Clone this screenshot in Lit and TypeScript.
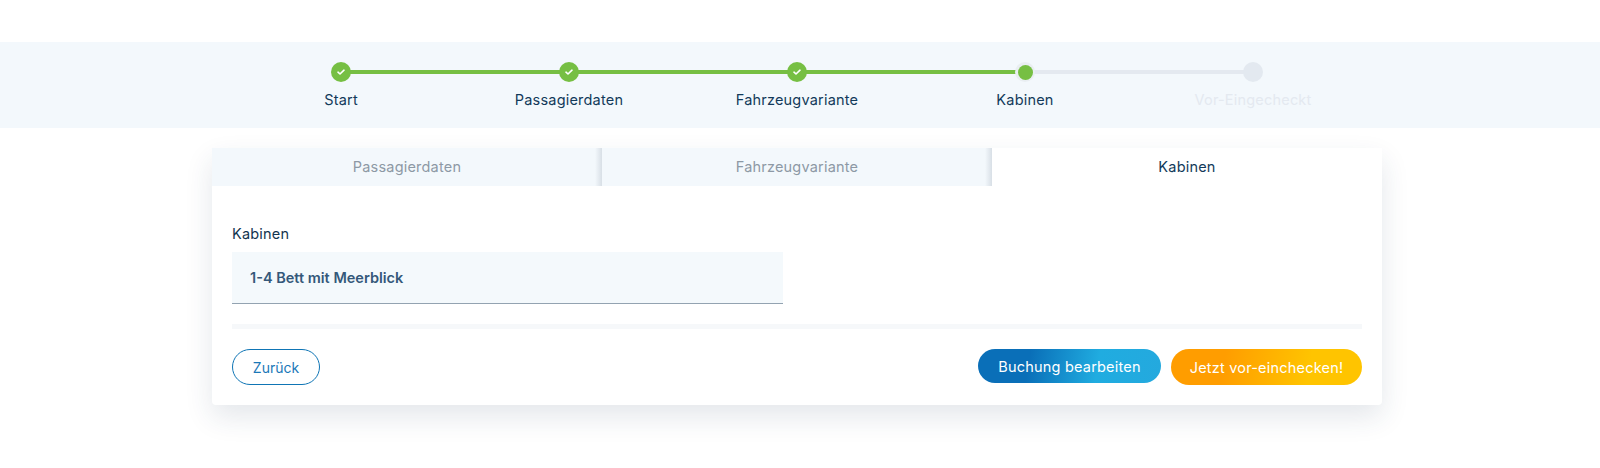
import { LitElement, html, css, svg } from "lit";
import { customElement } from "lit/decorators.js";

const check = svg`<svg class="chk" viewBox="0 0 10 10" width="10" height="10"><path d="M2 5.2 L4 7 L8 3.2" fill="none" stroke="#fff" stroke-width="1.6" stroke-linecap="round" stroke-linejoin="round"/></svg>`;

const steps = [
  { label: "Start", state: "done" },
  { label: "Passagierdaten", state: "done" },
  { label: "Fahrzeugvariante", state: "done" },
  { label: "Kabinen", state: "current" },
  { label: "Vor-Eingecheckt", state: "todo" },
];

@customElement("app-root")
export class AppRoot extends LitElement {
  static styles = css`
    :host {
      display: block;
      box-sizing: border-box;
      min-height: 468px;
      padding-top: 42px;
      font-family: "Inter", "Noto Sans", sans-serif;
      font-size: 14.5px;
      letter-spacing: 0.2px;
      color: #123a5a;
    }
    .band {
      background: #f3f8fc;
      height: 86px;
      display: flex;
      justify-content: center;
    }
    .steps {
      display: grid;
      grid-template-columns: repeat(5, 228px);
      padding: 20px 6px 0 0;
    }
    .step {
      position: relative;
      display: flex;
      flex-direction: column;
      align-items: center;
      gap: 9px;
    }
    .line {
      position: absolute;
      top: 8px;
      left: 114px;
      width: 228px;
      height: 4px;
      background: #e4e9f0;
    }
    .line.on { background: #76bf43; }
    .step:last-child .line { display: none; }
    .dot {
      position: relative;
      width: 20px;
      height: 20px;
      border-radius: 50%;
      display: flex;
      align-items: center;
      justify-content: center;
      background: #e3e9f0;
    }
    .done .dot { background: #76bf43; }
    .current .dot { background: #e9eef2; }
    .current .dot::after {
      content: "";
      width: 15px;
      height: 15px;
      border-radius: 50%;
      background: #76bf43;
    }
    .label {
      line-height: 18px;
      white-space: nowrap;
    }
    .todo .label { color: #e4e9f0; }

    .card {
      width: 1170px;
      margin: 20px 0 0 212px;
      background: #fff;
      box-shadow: 0 12px 28px rgba(30, 60, 90, 0.12);
      border-radius: 0 0 4px 4px;
    }
    .tabs {
      display: grid;
      grid-template-columns: repeat(3, 390px);
      height: 38px;
    }
    .tab {
      display: flex;
      align-items: center;
      justify-content: center;
      background: #f3f8fc;
      color: #8d99a5;
      padding-bottom: 1px;
      box-sizing: border-box;
    }
    .tab.sep {
      background: linear-gradient(to right, #f3f8fc calc(100% - 7px), #d8dfe6 100%);
    }
    .tab.active {
      background: #fff;
      color: #123a5a;
    }
    .body {
      padding: 38px 20px 20px;
    }
    .field-label {
      line-height: 20px;
      color: #12344f;
    }
    .field {
      margin-top: 8px;
      width: 551px;
      height: 52px;
      box-sizing: border-box;
      display: flex;
      align-items: center;
      padding: 0 18px;
      background: #f4f9fc;
      border-bottom: 1px solid #93a3b1;
      font-weight: 600;
      letter-spacing: 0;
      color: #34587a;
    }
    .divider {
      height: 5px;
      margin-top: 20px;
      background: #f6f8fa;
    }
    .actions {
      display: flex;
      align-items: flex-start;
      margin-top: 20px;
      gap: 10px;
    }
    .spacer { flex: 1; }
    .btn {
      box-sizing: border-box;
      display: flex;
      align-items: center;
      justify-content: center;
      border-radius: 18px;
      height: 36px;
      color: #fff;
      white-space: nowrap;
    }
    .back {
      width: 88px;
      background: #fff;
      border: 1px solid #0f75b5;
      color: #1a78b8;
      font-size: 14px;
      letter-spacing: 0;
    }
    .edit {
      width: 183px;
      height: 34px;
      background: linear-gradient(100deg, #0a6fb8 28%, #20ace0 65%, #24a9de 100%);
    }
    .go {
      width: 191px;
      background: linear-gradient(100deg, #ff9d00 28%, #ffc400 72%);
    }
  `;

  render() {
    return html`
      <div class="band">
        <div class="steps">
          ${steps.map(
            (s, i) => html`
              <div class="step ${s.state}">
                <div class="line ${i < 3 ? "on" : ""}"></div>
                <div class="dot">${s.state === "done" ? check : ""}</div>
                <div class="label">${s.label}</div>
              </div>
            `
          )}
        </div>
      </div>
      <div class="card">
        <div class="tabs">
          <div class="tab sep">Passagierdaten</div>
          <div class="tab sep">Fahrzeugvariante</div>
          <div class="tab active">Kabinen</div>
        </div>
        <div class="body">
          <div class="field-label">Kabinen</div>
          <div class="field">1-4 Bett mit Meerblick</div>
          <div class="divider"></div>
          <div class="actions">
            <div class="btn back">Zurück</div>
            <div class="spacer"></div>
            <div class="btn edit">Buchung bearbeiten</div>
            <div class="btn go">Jetzt vor-einchecken!</div>
          </div>
        </div>
      </div>
    `;
  }
}
